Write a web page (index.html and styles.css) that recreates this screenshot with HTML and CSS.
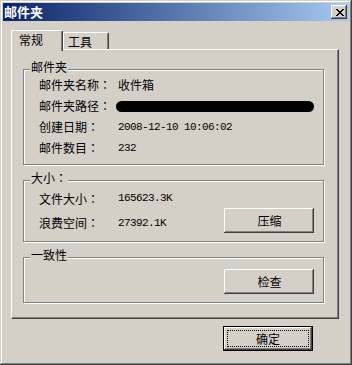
FILE: index.html
```html
<!DOCTYPE html>
<html>
<head>
    <title>邮件夹</title>
    <link rel="stylesheet" href="styles.css">
</head>
<body>
    <div class="window">
        <div class="titlebar">
            <span class="title">邮件夹</span>
            <div class="close-btn">
                <svg width="8" height="7" viewBox="0 0 8 7" shape-rendering="crispEdges">
                    <rect x="0" y="0" width="2" height="1"/><rect x="6" y="0" width="2" height="1"/>
                    <rect x="1" y="1" width="2" height="1"/><rect x="5" y="1" width="2" height="1"/>
                    <rect x="2" y="2" width="4" height="1"/>
                    <rect x="3" y="3" width="2" height="1"/>
                    <rect x="2" y="4" width="4" height="1"/>
                    <rect x="1" y="5" width="2" height="1"/><rect x="5" y="5" width="2" height="1"/>
                    <rect x="0" y="6" width="2" height="1"/><rect x="6" y="6" width="2" height="1"/>
                </svg>
            </div>
        </div>

        <div class="tabs">
            <div class="tab active">常规</div>
            <div class="tab">工具</div>
        </div>

        <div class="panel">
            <div class="group group-folder">
                <span class="legend">邮件夹</span>
                <div class="row"><span class="label">邮件夹名称<span class="colon">：</span></span><span>收件箱</span></div>
                <div class="row"><span class="label">邮件夹路径<span class="colon">：</span></span><span class="redacted"></span></div>
                <div class="row"><span class="label">创建日期<span class="colon">：</span></span><span class="num">2008-12-10 10:06:02</span></div>
                <div class="row"><span class="label">邮件数目<span class="colon">：</span></span><span class="num">232</span></div>
            </div>

            <div class="group group-size">
                <span class="legend">大小<span class="colon">：</span></span>
                <div class="row row-short"><span class="label">文件大小<span class="colon">：</span></span><span class="num">165623.3K</span></div>
                <div class="row row-btn">
                    <span class="label shift">浪费空间<span class="colon">：</span></span><span class="num shift">27392.1K</span>
                    <div class="btn">压缩</div>
                </div>
            </div>

            <div class="group group-check">
                <span class="legend">一致性</span>
                <div class="row row-btn">
                    <div class="btn">检查</div>
                </div>
            </div>
        </div>

        <div class="footer">
            <div class="btn default"><span class="focus">确定</span></div>
        </div>
    </div>
</body>
</html>
```

FILE: styles.css
```css
body {
    margin: 0;
    background: #d4d0c8;
    font-family: "Noto Sans CJK SC", sans-serif;
    font-size: 12px;
    color: #000;
}

.window {
    width: 352px;
    height: 365px;
    box-sizing: border-box;
    padding: 3px;
    background: #d4d0c8;
    box-shadow: inset -1px -1px #404040, inset 1px 1px #d4d0c8, inset -2px -2px #808080, inset 2px 2px #fff;
}

.titlebar {
    height: 18px;
    display: flex;
    align-items: center;
    justify-content: space-between;
    background: linear-gradient(to right, #0a246a, #a6caf0);
}

.title {
    color: #fff;
    font-weight: bold;
    font-size: 13px;
    line-height: 18px;
    padding-left: 1px;
}

.close-btn {
    width: 16px;
    height: 14px;
    margin-right: 2px;
    box-sizing: border-box;
    display: flex;
    align-items: center;
    justify-content: center;
    padding-left: 1px;
    background: #d4d0c8;
    box-shadow: inset -1px -1px #404040, inset 1px 1px #fff, inset -2px -2px #808080, inset 2px 2px #d4d0c8;
}

.tabs {
    display: flex;
    align-items: flex-end;
    height: 19px;
    margin: 9px 0 0 8px;
}

.tab {
    box-sizing: border-box;
    width: 46px;
    height: 17px;
    padding-left: 4px;
    line-height: 18px;
    border-top: 1px solid #fff;
    border-left: 1px solid #fff;
    border-right: 1px solid #404040;
    border-radius: 2px 2px 0 0;
    box-shadow: inset -1px 0 #808080;
    background: #d4d0c8;
}

.tab.active {
    width: 52px;
    height: 21px;
    padding-left: 7px;
    line-height: 17px;
    margin-bottom: -2px;
    position: relative;
    z-index: 1;
}

.panel {
    box-sizing: border-box;
    width: 328px;
    height: 270px;
    margin-left: 8px;
    padding: 19px 14px 0 11px;
    border-top: 1px solid #fff;
    border-left: 1px solid #fff;
    border-right: 1px solid #404040;
    border-bottom: 1px solid #404040;
    box-shadow: inset -1px -1px #808080;
}

.group {
    position: relative;
    border: 1px solid #808080;
    box-shadow: 1px 1px 0 #fff, inset 1px 1px 0 #fff;
    padding-left: 15px;
    padding-right: 9px;
}

.group + .group {
    margin-top: 15px;
}

.legend {
    position: absolute;
    top: -10px;
    left: 6px;
    padding: 0 1px;
    line-height: 14px;
    background: #d4d0c8;
}

/* 全角冒号居中 */
.colon {
    font-family: "Noto Sans CJK TC", sans-serif;
}

.group-folder {
    padding-top: 4px;
    padding-bottom: 6px;
}

.group-size {
    padding-top: 7px;
    padding-bottom: 8px;
}

.group-check {
    padding-top: 11px;
    padding-bottom: 8px;
}

.row {
    display: flex;
    align-items: center;
    height: 21px;
}

.row-short {
    height: 20px;
}

.row-btn {
    height: 25px;
    justify-content: flex-end;
}

.row-btn .label + .num {
    flex: 1;
}

.shift {
    padding-top: 4px;
}

.label {
    width: 79px;
    flex-shrink: 0;
}

.num {
    font-family: "Liberation Mono", monospace;
    font-size: 11px;
    letter-spacing: -0.6px;
}

.redacted {
    display: block;
    width: 206px;
    height: 11px;
    margin-left: -2px;
    margin-top: 1px;
    background: #000;
    border-radius: 6px;
}

.btn {
    box-sizing: border-box;
    width: 90px;
    height: 25px;
    display: flex;
    align-items: center;
    justify-content: center;
    padding-left: 1px;
    background: #d4d0c8;
    box-shadow: inset -1px -1px #404040, inset 1px 1px #fff, inset -2px -2px #808080, inset 2px 2px #d4d0c8;
}

.footer {
    display: flex;
    justify-content: flex-end;
    padding-right: 36px;
    margin-top: 7px;
}

.btn.default {
    border: 1px solid #000;
    padding: 3px;
}

.focus {
    flex: 1;
    align-self: stretch;
    display: flex;
    align-items: center;
    justify-content: center;
    border: 1px dotted #000;
}
```
